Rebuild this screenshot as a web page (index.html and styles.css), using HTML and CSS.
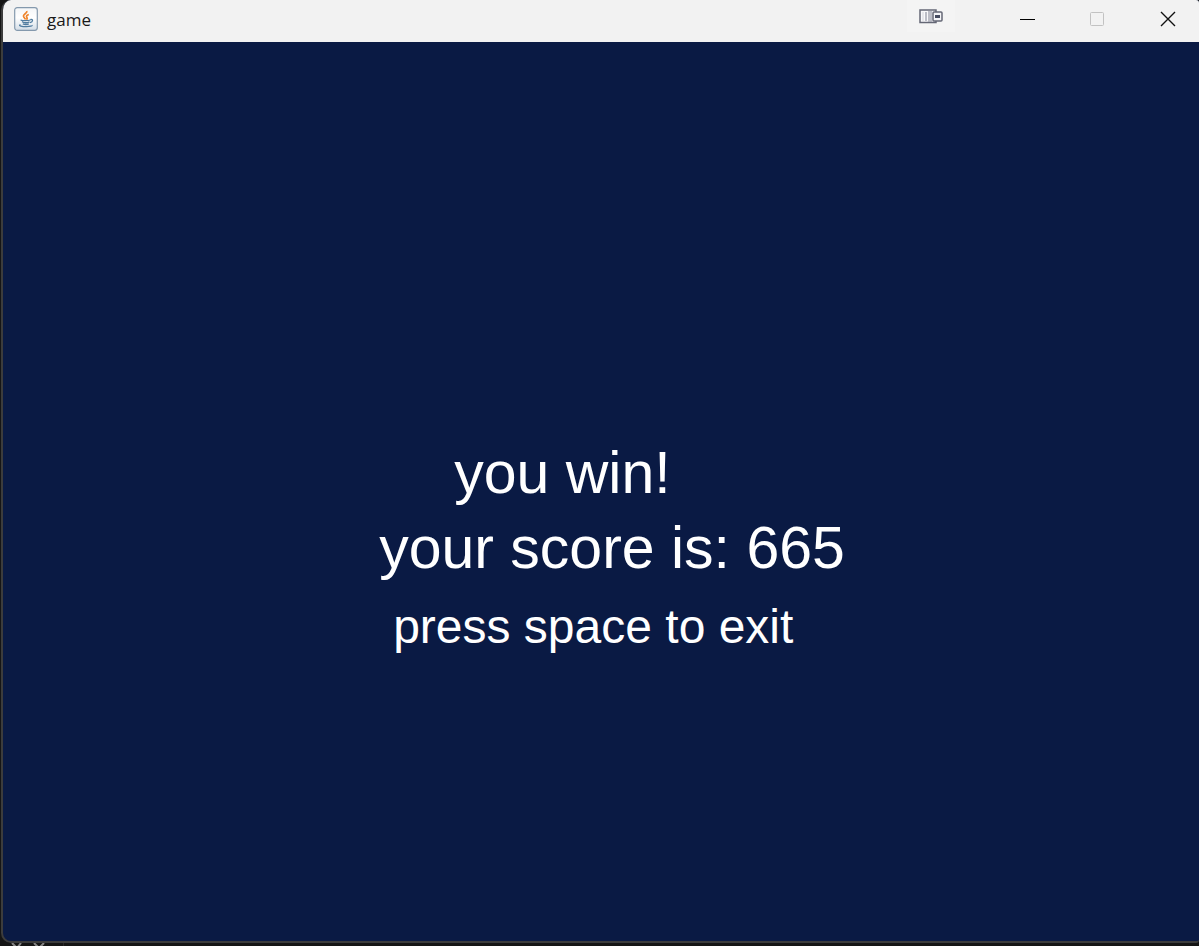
FILE: index.html
```html
<!DOCTYPE html>
<html lang="en">
<head>
<meta charset="utf-8">
<title>game</title>
<link rel="stylesheet" href="styles.css">
</head>
<body>
<div class="window">
  <header class="titlebar">
    <svg class="app-icon" width="24" height="24" viewBox="0 0 24 24" fill="none" aria-hidden="true">
      <defs><linearGradient id="tile" x1="0" y1="0" x2="0" y2="1"><stop offset="0" stop-color="#f4f6f8"/><stop offset=".45" stop-color="#fff"/><stop offset="1" stop-color="#d3dde7"/></linearGradient></defs>
      <rect x=".7" y=".7" width="22.6" height="22.6" rx="2.5" fill="url(#tile)" stroke="#8499ad" stroke-width="1.2"/>
      <path d="M12.8 4c1 2.4-4.300 3.200-3.300 5.500.4 1.200 1.700 1.800 2 3M14.800 7.500c-2 .9-3 1.700-1.900 3 .6.8.2 1.500-.5 2" stroke="#ee842c" stroke-width="1.700"/>
      <path d="M7.500 12.900c-2 .8 6 1.300 8.800.1M8 14.800c1.800 1 5.300 1 7.500 0M8.800 16.800c1.800.8 4.400.8 6 0M16.300 12.600c3-.8 3 2-.3 3M6.500 17.700c-3 1.200 2 2.100 6 2 3.500-.1 6-.8 5.500-1.500" stroke="#4f7b9f" stroke-width="1.300"/>
    </svg>
    <h1 class="title">game</h1>
    <button class="overlay-button" type="button" aria-label="Display options">
      <svg width="24" height="15" viewBox="0 0 24 15" fill="none" aria-hidden="true">
        <rect x="1" y="1" width="16" height="12.500" fill="#f8f8fa" stroke="#646775" stroke-width="1.500"/>
        <path d="M4 3v9" stroke="#d5d6dc"/>
        <path d="M7 3v9M10 2v11M12 2v11" stroke="#9b9dab" stroke-width="1.300"/>
        <rect x="14" y="3" width="9" height="9" rx="1" fill="#f4f4f7" stroke="#646775" stroke-width="1.500"/>
        <path d="M16 7.500h5" stroke="#454b60" stroke-width="3"/>
      </svg>
    </button>
    <div class="controls">
      <button class="control" type="button" aria-label="Minimize"><svg width="16" height="16" viewBox="0 0 16 16"><path d="M0 8.500h15" stroke="#000"/></svg></button>
      <button class="control" type="button" aria-label="Maximize" disabled><svg width="16" height="16" viewBox="0 0 16 16" fill="none"><rect x=".5" y="1.500" width="13" height="13" rx="1" stroke="#c2c2c2"/></svg></button>
      <button class="control close" type="button" aria-label="Close"><svg width="16" height="16" viewBox="0 0 16 16"><path d="M1 1l14 14M15 1L1 15" stroke="#111" stroke-width="1.400"/></svg></button>
    </div>
  </header>
  <main class="game">
    <div class="messages">
      <p class="message result">you win!</p>
      <p class="message">your score is: 665</p>
      <p class="message hint">press space to exit</p>
    </div>
  </main>
</div>
<footer class="desktop-edge">
  <svg class="marks" width="48" height="3" viewBox="0 0 48 3" fill="none" aria-hidden="true"><path d="M12 0l5 5 4-5M34 0l5 5 5-5" stroke="#858585" stroke-width="2"/></svg>
  <span class="panel-edge"></span>
</footer>
</body>
</html>
```
FILE: styles.css
```css
* {
  box-sizing: border-box;
}

body {
  display: flex;
  flex-direction: column;
  min-height: 100vh;
  margin: 0;
  background: #151515;
  font-family: "Liberation Sans", Arial, sans-serif;
}

.window {
  display: flex;
  flex: 1;
  flex-direction: column;
  overflow: hidden;
  border: solid #3c3c3c;
  border-width: 0 0 2px 2px;
  border-radius: 10px 3px 3px 10px;
  margin-left: 1px;
  background: #0a1a44;
}

.titlebar {
  display: flex;
  align-items: center;
  height: 42px;
  padding: 0 0 4px 11px;
  background: #f2f2f2;
}

.app-icon {
  flex: none;
}

.title {
  margin: 0 0 0 9px;
  padding-top: 2px;
  color: #191919;
  font: 400 17px/24px "Open Sans", "Noto Sans", sans-serif;
}

.overlay-button,
.control {
  display: flex;
  align-items: center;
  justify-content: center;
  border: 0;
  padding: 0;
  background: none;
}

.overlay-button {
  align-self: flex-start;
  width: 48px;
  height: 32px;
  margin-left: auto;
  background: #f4f4f4;
}

.controls {
  display: flex;
  margin-left: 38px;
}

.control {
  width: 70px;
  height: 38px;
}

.close {
  width: 62px;
  margin-left: 4px;
}

.game {
  display: flex;
  flex: 1;
  align-items: center;
  justify-content: center;
  padding: 116px 0 0 22px;
}

.message {
  margin: 0;
  color: #fff;
  font-size: 59px;
  line-height: 75px;
  white-space: nowrap;
}

.result {
  padding-left: 75px;
}

.hint {
  padding: 3px 0 0 14px;
  font-size: 48px;
}

.desktop-edge {
  display: flex;
  height: 3px;
  background: #151515;
}

.marks {
  flex: none;
}

.panel-edge {
  flex: 1;
  border-left: 1px solid #292929;
  margin-left: 15px;
}
```
